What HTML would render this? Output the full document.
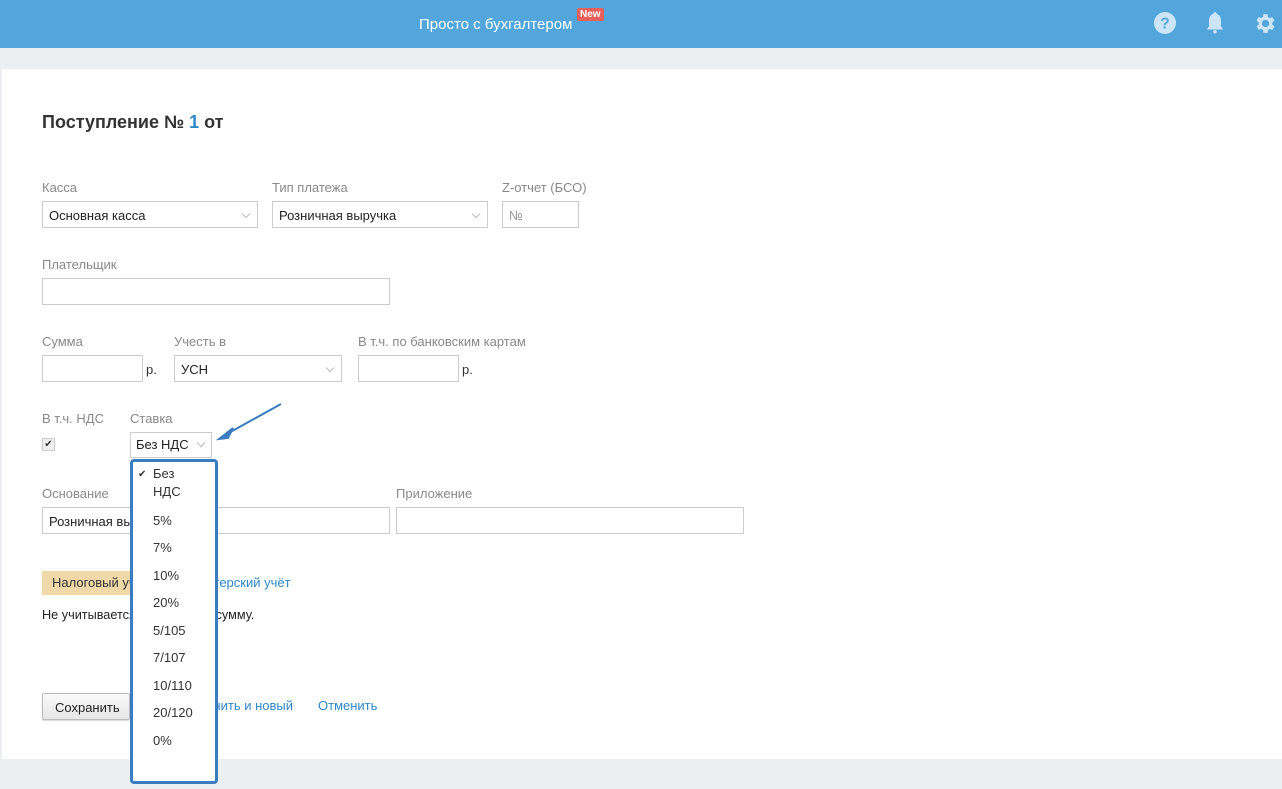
<!DOCTYPE html>
<html><head><meta charset="utf-8"><style>
*{box-sizing:border-box;margin:0;padding:0}
body{width:1282px;height:789px;background:#eceff2;font-family:"Liberation Sans",Arial,sans-serif;font-size:13px;color:#333;position:relative;overflow:hidden}
.a{position:absolute}
.hdr{left:0;top:0;width:1282px;height:48px;background:#52a6dc}
.card{left:2px;top:69px;width:1280px;height:690px;background:#fff}
.lbl{color:#888;font-size:13px}
.inp{border:1px solid #ccc;background:#fff;height:27px;padding:6px 6px;font-size:13px;color:#222}
.chev{position:absolute;right:8px;top:9px;width:6px;height:6px;border-right:1px solid #bbb;border-bottom:1px solid #bbb;transform:rotate(45deg)}
.link{color:#2d87c8}
.opt{position:absolute;left:20px;font-size:13px;color:#333}
</style></head><body>
<div class="a hdr"></div>
<div class="a" style="left:419px;top:16px;color:#fff;font-size:15px">Просто с бухгалтером</div>
<div class="a" style="left:577px;top:8px;background:#e8605a;color:#fff;font-size:10px;font-weight:bold;padding:1px 3px;border-radius:2px">New</div>
<svg class="a" style="left:1154px;top:12px" width="22" height="22" viewBox="0 0 20 20"><circle cx="10" cy="10" r="10" fill="#cde6f7"/><text x="10" y="15" text-anchor="middle" font-family="Liberation Sans" font-weight="bold" font-size="14" fill="#52a6dc">?</text></svg>
<svg class="a" style="left:1204px;top:11px" width="22" height="24" viewBox="0 0 20 22"><path d="M10 1c-1 0-1.5.7-1.5 1.5C5.5 3.5 4.5 6 4.5 9v5L2.5 17h15l-2-3V9c0-3-1-5.5-4-6.5C11.5 1.7 11 1 10 1z" fill="#cde6f7"/><circle cx="10" cy="19" r="1.6" fill="#cde6f7"/></svg>
<svg class="a" style="left:1253px;top:11px" width="25" height="25" viewBox="0 0 24 24"><path fill="#cde6f7" d="M19.4 13a7.5 7.5 0 000-2l2.1-1.6-2-3.5-2.5 1a7.4 7.4 0 00-1.7-1L15 3h-4l-.4 2.7c-.6.3-1.2.6-1.7 1l-2.5-1-2 3.5L6.6 11a7.5 7.5 0 000 2l-2.2 1.6 2 3.5 2.5-1c.5.4 1.1.7 1.7 1L11 21h4l.4-2.7c.6-.3 1.2-.6 1.7-1l2.5 1 2-3.5zM13 15.5a3.5 3.5 0 110-7 3.5 3.5 0 010 7z" transform="translate(-1 0)"/></svg>
<div class="a card"></div>

<div class="a" style="left:42px;top:112px;font-size:18px;font-weight:bold;color:#333">Поступление № <span style="color:#2d87c8">1</span> от</div>

<div class="a lbl" style="left:42px;top:180px">Касса</div>
<div class="a inp" style="left:42px;top:201px;width:216px">Основная касса<span class="chev"></span></div>
<div class="a lbl" style="left:272px;top:180px">Тип платежа</div>
<div class="a inp" style="left:272px;top:201px;width:216px">Розничная выручка<span class="chev"></span></div>
<div class="a lbl" style="left:502px;top:180px">Z-отчет (БСО)</div>
<div class="a inp" style="left:502px;top:201px;width:77px;color:#999">№</div>

<div class="a lbl" style="left:42px;top:257px">Плательщик</div>
<div class="a inp" style="left:42px;top:278px;width:348px"></div>

<div class="a lbl" style="left:42px;top:334px">Сумма</div>
<div class="a inp" style="left:42px;top:355px;width:101px"></div>
<div class="a" style="left:146px;top:362px">р.</div>
<div class="a lbl" style="left:174px;top:334px">Учесть в</div>
<div class="a inp" style="left:174px;top:355px;width:168px">УСН<span class="chev"></span></div>
<div class="a lbl" style="left:358px;top:334px">В т.ч. по банковским картам</div>
<div class="a inp" style="left:358px;top:355px;width:101px"></div>
<div class="a" style="left:462px;top:362px">р.</div>

<div class="a lbl" style="left:42px;top:411px">В т.ч. НДС</div>
<div class="a" style="left:42px;top:438px;width:13px;height:13px;border:1px solid #ccc;background:#eee;font-size:10px;line-height:11px;text-align:center">✔</div>
<div class="a lbl" style="left:130px;top:411px">Ставка</div>
<div class="a inp" style="left:130px;top:432px;width:82px;height:26px;padding:4px 5px;font-size:13px">Без НДС<span class="chev" style="top:7px;right:7px"></span></div>
<svg class="a" style="left:215px;top:402px" width="70" height="40"><line x1="66" y1="2" x2="10" y2="33" stroke="#3a7cc0" stroke-width="2"/><path d="M4 37 L18 26 L13 36 Z" fill="#3a7cc0" stroke="#3a7cc0" stroke-width="2"/></svg>

<div class="a lbl" style="left:42px;top:486px">Основание</div>
<div class="a inp" style="left:42px;top:507px;width:348px">Розничная выручка</div>
<div class="a lbl" style="left:396px;top:486px">Приложение</div>
<div class="a inp" style="left:396px;top:507px;width:348px"></div>

<div class="a" style="left:42px;top:571px;width:160px;height:24px;background:#f0d8a8;padding:4px 10px">Налоговый учёт</div>
<div class="a link" style="left:173px;top:575px">Бухгалтерский учёт</div>
<div class="a" style="left:42px;top:608px;color:#222;font-size:12.7px">Не учитывается в налоговую сумму.</div>

<div class="a" style="left:42px;top:693px;width:88px;height:27px;border:1px solid #bbb;border-radius:2px;background:linear-gradient(#fafafa,#e6e6e6);padding:6px 12px;color:#222;box-shadow:0 1px 1px rgba(0,0,0,.15)">Сохранить</div>
<div class="a" style="left:130px;top:693px;width:10px;height:27px;border:1px solid #bbb;background:#eee"></div>
<div class="a link" style="left:176px;top:698px">Сохранить и новый</div>
<div class="a link" style="left:318px;top:698px">Отменить</div>

<div class="a" style="left:130px;top:459px;width:88px;height:325px;background:#fff;border:3px solid #3a7cc0;border-radius:4px">
<div class="opt" style="left:5px;top:7px;font-size:10px">✔</div>
<div class="opt" style="top:3px;line-height:18px">Без<br>НДС</div>
<div class="opt" style="top:51px">5%</div>
<div class="opt" style="top:78px">7%</div>
<div class="opt" style="top:106px">10%</div>
<div class="opt" style="top:133px">20%</div>
<div class="opt" style="top:161px">5/105</div>
<div class="opt" style="top:188px">7/107</div>
<div class="opt" style="top:216px">10/110</div>
<div class="opt" style="top:243px">20/120</div>
<div class="opt" style="top:271px">0%</div>
</div>
</body></html>
